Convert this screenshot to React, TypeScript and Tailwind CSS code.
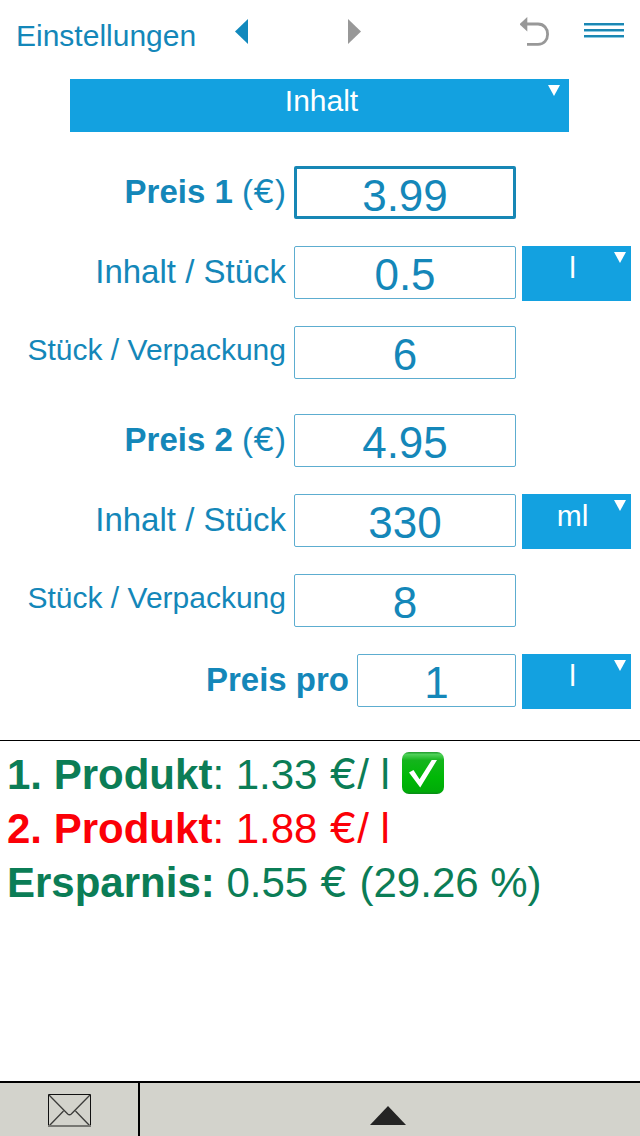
import React, { useState } from 'react'
import clsx from 'clsx'

const units = ['l', 'ml', 'cl', 'kg', 'g']
const modes = ['Inhalt', 'Gewicht', 'Fläche']

const products = [
  { id: 1, price: '3.99', content: '0.5', unit: 'l', pieces: '6', active: true },
  { id: 2, price: '4.95', content: '330', unit: 'ml', pieces: '8', active: false },
]

function Euro() {
  return <span className="font-['Inter',sans-serif] leading-none">€</span>
}

function Dropdown({
  id,
  label,
  options,
  initial,
  className,
  selectClassName,
  arrowClassName,
}: {
  id: string
  label: string
  options: string[]
  initial: string
  className: string
  selectClassName: string
  arrowClassName: string
}) {
  return (
    <div className={clsx('relative', className)}>
      <select
        id={id}
        aria-label={label}
        defaultValue={initial}
        className={clsx(
          'block w-full appearance-none bg-[#13a1e0] text-center text-[30px] leading-9 text-white [text-align-last:center]',
          selectClassName,
        )}
      >
        {options.map((option) => (
          <option key={option}>{option}</option>
        ))}
      </select>
      <svg
        aria-hidden="true"
        viewBox="0 0 12 11"
        className={clsx(
          'pointer-events-none absolute top-1.5 h-[11px] w-3 fill-white',
          arrowClassName,
        )}
      >
        <path d="M0 0h12L6 11z" />
      </svg>
    </div>
  )
}

function UnitSelect({ id, initial }: { id: string; initial: string }) {
  return (
    <Dropdown
      id={id}
      label="Einheit"
      options={units}
      initial={initial}
      className="ml-1.5 w-[109px] shrink-0"
      selectClassName="h-[55px] pr-2 pb-3"
      arrowClassName="right-[5px]"
    />
  )
}

function Field({
  id,
  label,
  initial,
  unit,
  active = false,
  small = false,
  narrow = false,
}: {
  id: string
  label: React.ReactNode
  initial: string
  unit?: string
  active?: boolean
  small?: boolean
  narrow?: boolean
}) {
  const [value, setValue] = useState(initial)

  return (
    <div className="flex min-h-[55px] items-start">
      <label
        htmlFor={id}
        className={clsx(
          'flex-1 pr-2 text-right whitespace-nowrap',
          small ? 'text-[30px] leading-[48px]' : 'text-[33px] leading-[52px]',
        )}
      >
        {label}
      </label>
      <input
        id={id}
        inputMode="decimal"
        value={value}
        onChange={(e) => setValue(e.target.value)}
        className={clsx(
          'h-[53px] shrink-0 rounded-xs bg-white text-center text-[44px] leading-[44px] outline-none',
          active ? 'border-3 border-[#1787b5] pt-1.5' : 'border border-[#5dadd0] pt-1',
          narrow ? 'w-[159px]' : 'w-[222px]',
        )}
      />
      {unit ? (
        <UnitSelect id={`${id}-unit`} initial={unit} />
      ) : (
        <div className="ml-1.5 w-[109px] shrink-0" />
      )}
    </div>
  )
}

function Header() {
  return (
    <header className="flex h-[79px] items-start px-4">
      <button type="button" className="mt-4 text-[30px] leading-10">
        Einstellungen
      </button>
      <button type="button" aria-label="Zurück" className="mt-[19px] ml-[39px]">
        <svg viewBox="0 0 13 25" className="h-[25px] w-[13px] fill-[#1289bd]">
          <path d="M13 0v25L0 12.5z" />
        </svg>
      </button>
      <button type="button" aria-label="Vor" className="mt-[19px] ml-[100px]">
        <svg viewBox="0 0 13 25" className="h-[25px] w-[13px] fill-[#989898]">
          <path d="M0 0v25l13-12.5z" />
        </svg>
      </button>
      <button type="button" aria-label="Rückgängig" className="mt-[17px] ml-auto">
        <svg viewBox="0 0 30 30" className="h-[30px] w-[30px]">
          <path d="M-.5 7.2 7.3 0v14.4z" fill="#989898" />
          <path
            d="M6 7h12c6 0 9.6 4.6 9.6 10.2S24 27.4 18 27.4H7"
            fill="none"
            stroke="#989898"
            strokeWidth="2.8"
          />
        </svg>
      </button>
      <button type="button" aria-label="Menü" className="mt-[23px] ml-[34px]">
        <svg viewBox="0 0 40 15" className="h-[15px] w-10">
          <path d="M0 0h40v3H0zM0 6h40v3H0zM0 12h40v3H0z" fill="#8ccbe3" />
          <path d="M0 0h40v2H0zM0 6h40v2H0zM0 12h40v2H0z" fill="#1b87b3" />
        </svg>
      </button>
    </header>
  )
}

function CheckBadge() {
  return (
    <svg
      role="img"
      aria-label="Günstiger"
      viewBox="0 0 42 42"
      className="mt-1 ml-3 h-[42px] w-[42px]"
    >
      <defs>
        <linearGradient id="badge" x1="0" y1="0" x2="0" y2="1">
          <stop offset="0" stopColor="#1f9a2c" />
          <stop offset="0.06" stopColor="#4fd158" />
          <stop offset="0.2" stopColor="#14b41c" />
          <stop offset="0.6" stopColor="#00b806" />
          <stop offset="0.94" stopColor="#00ab08" />
          <stop offset="1" stopColor="#0a8a18" />
        </linearGradient>
      </defs>
      <rect width="42" height="42" rx="7" fill="url(#badge)" />
      <path d="M7 20.5 11.5 18l6 9.2L29.7 8H35L18.2 35.5z" fill="#fff" />
    </svg>
  )
}

function Results() {
  return (
    <section className="flex-1 border-t border-black pt-[7px] pl-[7px] text-[42px] leading-[54px] text-[#0b7d56]">
      <p className="flex items-start">
        <span>
          <b>1. Produkt</b>: 1.33 <Euro />/ l
        </span>
        <CheckBadge />
      </p>
      <p className="text-[#fb0007]">
        <b>2. Produkt</b>: 1.88 <Euro />/ l
      </p>
      <p>
        <b>Ersparnis:</b> 0.55 <Euro /> (29.26 %)
      </p>
    </section>
  )
}

function Footer() {
  return (
    <footer className="flex h-[55px] border-t-2 border-black bg-[#d3d3cc]">
      <button
        type="button"
        aria-label="E-Mail"
        className="flex w-[140px] items-start justify-center border-r-2 border-black pt-[11px]"
      >
        <svg viewBox="0 0 43 33" className="h-[33px] w-[43px]" fill="none">
          <path
            d="M1 1l18.7 19q1.8 1.6 3.6 0L42 1M1 32l14.5-15M42 32L27.5 17"
            stroke="#3c3c3a"
            strokeWidth="1.3"
          />
          <path d="M.5 32V.5h42V32" stroke="#111" />
          <path d="M0 32h43" stroke="#777773" strokeWidth="2" />
        </svg>
      </button>
      <button
        type="button"
        aria-label="Aufklappen"
        className="flex flex-1 items-start justify-center pt-[23px] pr-1"
      >
        <svg viewBox="0 0 36 19" className="h-[19px] w-9 fill-[#242424]">
          <path d="M18 0l18 19H0z" />
        </svg>
      </button>
    </footer>
  )
}

export default function App() {
  return (
    <div className="flex min-h-screen flex-col bg-white font-['Liberation_Sans',Arial,sans-serif] text-[#1487b9]">
      <Header />
      <Dropdown
        id="mode"
        label="Vergleichsart"
        options={modes}
        initial="Inhalt"
        className="mr-[71px] ml-[70px]"
        selectClassName="h-[53px] pb-2.5 pl-1"
        arrowClassName="right-[9px]"
      />
      <main className="mt-[34px] mb-[31px] flex flex-col gap-[33px] pr-[9px]">
        {products.map((product) => (
          <div key={product.id} className="flex flex-col gap-[25px]">
            <Field
              id={`price-${product.id}`}
              label={
                <>
                  <b>Preis {product.id}</b> (<Euro />)
                </>
              }
              initial={product.price}
              active={product.active}
            />
            <Field
              id={`content-${product.id}`}
              label="Inhalt / Stück"
              initial={product.content}
              unit={product.unit}
            />
            <Field
              id={`pieces-${product.id}`}
              label="Stück / Verpackung"
              initial={product.pieces}
              small
            />
          </div>
        ))}
        <div className="-mt-2">
          <Field id="per" label={<b>Preis pro</b>} initial="1" unit="l" narrow />
        </div>
      </main>
      <Results />
      <Footer />
    </div>
  )
}
